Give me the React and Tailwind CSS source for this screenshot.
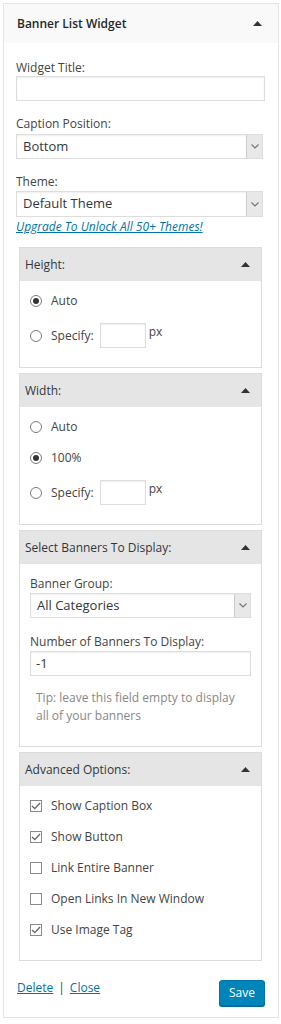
import React from "react";

const font = { fontFamily: '"Open Sans", "Liberation Sans", sans-serif' };

function UpArrow({ className = "" }) {
  return (
    <svg width="9" height="5" viewBox="0 0 9 5" className={className}>
      <path d="M0 5 L4.5 0 L9 5 Z" fill="#333" />
    </svg>
  );
}

function Chevron() {
  return (
    <svg width="8" height="5" viewBox="0 0 8 5">
      <path d="M0.5 0.5 L4 4 L7.5 0.5" fill="none" stroke="#777" strokeWidth="1.2" />
    </svg>
  );
}

function Select({ value, h = "h-[25px]" }) {
  return (
    <div className={`flex ${h} border border-[#ddd] bg-white shadow-[inset_0_1px_2px_rgba(0,0,0,0.07)]`}>
      <div className="flex-1 pl-[6px] text-[13px] leading-[23px] text-[#32373c]">{value}</div>
      <div className="flex w-[16px] items-center justify-center border-l border-[#ccc] bg-[#e8e8e8]">
        <Chevron />
      </div>
    </div>
  );
}

function Input({ value = "", className = "" }) {
  return (
    <div className={`h-[25px] border border-[#ddd] bg-white pl-[5px] text-[13px] leading-[23px] text-[#32373c] shadow-[inset_0_1px_2px_rgba(0,0,0,0.07)] ${className}`}>
      {value}
    </div>
  );
}

function Radio({ checked }) {
  return (
    <div className="flex h-[12px] w-[12px] items-center justify-center rounded-full border border-[#7a7a7a] bg-white">
      {checked && <div className="h-[6px] w-[6px] rounded-full bg-[#333]" />}
    </div>
  );
}

function Check({ checked }) {
  return (
    <div className="flex h-[12px] w-[12px] items-center justify-center border border-[#8a8a8a] bg-white">
      {checked && (
        <svg width="10" height="8" viewBox="0 0 10 8">
          <path d="M1 4 L3.8 6.6 L9 1" fill="none" stroke="#666" strokeWidth="1.3" />
        </svg>
      )}
    </div>
  );
}

function Box({ title, children, className = "" }) {
  return (
    <div className={`mx-[3px] border border-[#dcdcdc] bg-white ${className}`}>
      <div className="flex h-[33px] items-center justify-between bg-[#e5e5e5] pl-[5px] pr-[11px] text-[12px] text-[#32373c]">
        <span>{title}</span>
        <UpArrow />
      </div>
      {children}
    </div>
  );
}

function RadioRow({ checked, label, className = "" }) {
  return (
    <div className={`flex h-[16px] items-center ${className}`}>
      <Radio checked={checked} />
      <span className="ml-[9px] text-[12px] leading-[16px] text-[#444]">{label}</span>
    </div>
  );
}

function SpecifyRow({ className = "" }) {
  return (
    <div className={`flex h-[25px] items-center ${className}`}>
      <Radio />
      <span className="ml-[9px] text-[12px] text-[#444]">Specify:</span>
      <div className="ml-[6px] h-[25px] w-[46px] border border-[#ddd] bg-white shadow-[inset_0_1px_2px_rgba(0,0,0,0.07)]" />
      <span className="ml-[3px] self-start text-[12px] leading-[18px] text-[#444]">px</span>
    </div>
  );
}

function CheckRow({ checked, label, className = "" }) {
  return (
    <div className={`flex h-[16px] items-center ${className}`}>
      <Check checked={checked} />
      <span className="ml-[9px] text-[12px] leading-[16px] text-[#444]">{label}</span>
    </div>
  );
}

export default function App() {
  return (
    <div style={font} className="bg-white pl-[3px] pt-[3px]">
      <div className="w-[276px] border border-[#e5e5e5] bg-white">
        <div className="flex h-[39px] items-center justify-between bg-[#f9f9f9] pl-[13px] pr-[16px]">
          <span className="text-[12px] font-semibold text-[#23282d]">Banner List Widget</span>
          <UpArrow />
        </div>
        <div className="pl-[12px] pr-[13px] pb-[11px]">
          <div className="mt-[17px] text-[12px] leading-[16px] text-[#444]">Widget Title:</div>
          <Input />
          <div className="mt-[15px] text-[12px] leading-[16px] text-[#444]">Caption Position:</div>
          <div className="mt-[2px] mr-[2px]">
            <Select value="Bottom" />
          </div>
          <div className="mt-[15px] text-[12px] leading-[16px] text-[#444]">Theme:</div>
          <div className="mt-[1px] mr-[2px]">
            <Select value="Default Theme" h="h-[26px]" />
          </div>
          <div className="mt-[2px] text-[12px] italic leading-[16px]">
            <a href="#" className="text-[#0073aa] underline">Upgrade To Unlock All 50+ Themes!</a>
          </div>

          <Box title="Height:" className="mt-[12px]">
            <div className="pl-[10px] pt-[12px] pb-[19px]">
              <RadioRow checked label="Auto" />
              <SpecifyRow className="mt-[14px]" />
            </div>
          </Box>

          <Box title="Width:" className="mt-[5px]">
            <div className="pl-[10px] pt-[12px] pb-[19px]">
              <RadioRow label="Auto" />
              <RadioRow checked label="100%" className="mt-[15px]" />
              <SpecifyRow className="mt-[14px]" />
            </div>
          </Box>

          <Box title="Select Banners To Display:" className="mt-[5px]">
            <div className="px-[10px] pt-[12px] pb-[21px]">
              <div className="text-[12px] leading-[16px] text-[#444]">Banner Group:</div>
              <div className="mt-[1px]">
                <Select value="All Categories" />
              </div>
              <div className="mt-[16px] text-[12px] leading-[16px] text-[#444]">Number of Banners To Display:</div>
              <Input value="-1" className="mt-[1px]" />
              <div className="mt-[13px] pl-[6px] pr-[14px] text-[12px] leading-[18px] text-[#888]">
                Tip: leave this field empty to display all of your banners
              </div>
            </div>
          </Box>

          <Box title="Advanced Options:" className="mt-[5px]">
            <div className="pl-[10px] pt-[12px] pb-[22px]">
              <CheckRow checked label="Show Caption Box" />
              <CheckRow checked label="Show Button" className="mt-[15px]" />
              <CheckRow label="Link Entire Banner" className="mt-[15px]" />
              <CheckRow label="Open Links In New Window" className="mt-[15px]" />
              <CheckRow checked label="Use Image Tag" className="mt-[15px]" />
            </div>
          </Box>

          <div className="mt-[19px] flex items-start justify-between pl-[1px]">
            <div className="text-[12px] leading-[16px] text-[#444]">
              <a href="#" className="text-[#0073aa] underline">Delete</a>
              <span className="mx-[5px]">|</span>
              <a href="#" className="text-[#0073aa] underline">Close</a>
            </div>
            <button className="h-[26px] w-[46px] rounded-[3px] border border-[#0073aa] bg-[#0085ba] text-[12px] leading-[24px] text-white shadow-[0_1px_0_#006799]">
              Save
            </button>
          </div>
        </div>
      </div>
    </div>
  );
}
